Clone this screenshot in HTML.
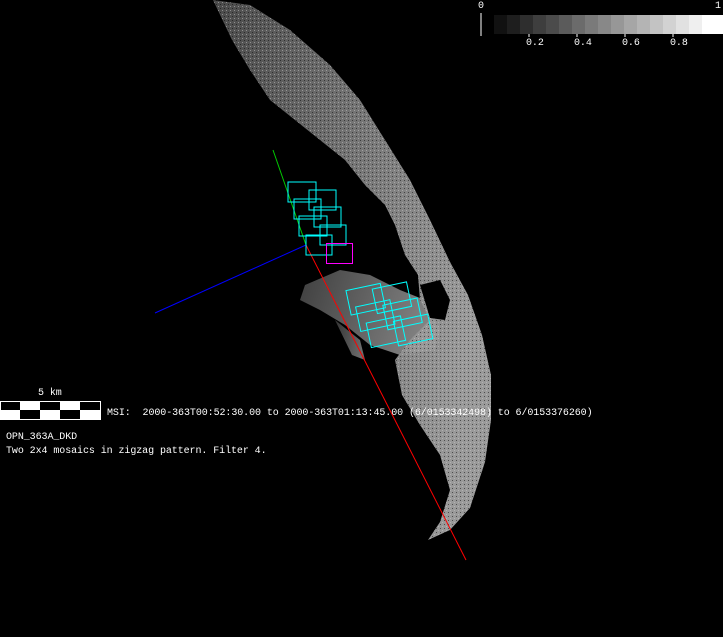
<!DOCTYPE html>
<html><head><style>
body{margin:0;background:#000;width:723px;height:637px;overflow:hidden;position:relative;font-family:"Liberation Mono","DejaVu Sans Mono",monospace;color:#fff;font-size:10px;letter-spacing:-0.08px}
.t{position:absolute;white-space:pre;line-height:12px}
</style></head><body>
<svg width="723" height="637" style="position:absolute;left:0;top:0">
<defs>
<linearGradient id="g" x1="0" y1="0" x2="1" y2="0.2">
<stop offset="0" stop-color="#4a4a4a"/><stop offset="0.6" stop-color="#7a7a7a"/><stop offset="1" stop-color="#9a9a9a"/>
</linearGradient>
<pattern id="p" width="4" height="4" patternUnits="userSpaceOnUse"><rect x="0" y="0" width="1" height="1" fill="#000"/><rect x="2" y="2" width="1" height="1" fill="#ccc"/></pattern>
</defs>
<g fill="url(#g)">
<path d="M213 0 L250 5 L290 30 L330 65 L360 100 L385 140 L410 180 L430 220 L450 262 L468 295 L482 335 L491 375 L491 420 L485 462 L470 508 L450 530 L428 540 L440 522 L450 490 L440 455 L420 425 L402 395 L395 360 L410 340 L430 320 L420 300 L418 275 L405 255 L395 225 L385 205 L365 185 L345 160 L320 140 L295 120 L270 100 L250 70 L232 40 Z"/>
<path d="M305 285 L340 270 L370 275 L400 290 L425 300 L440 330 L435 350 L400 355 L370 345 L345 325 L320 310 L300 300 Z" opacity="0.85"/>
<path d="M335 320 L360 340 L365 360 L352 355 Z" opacity="0.7"/>
</g>
<path d="M213 0 L250 5 L290 30 L330 65 L360 100 L385 140 L410 180 L430 220 L450 262 L468 295 L482 335 L491 375 L491 420 L485 462 L470 508 L450 530 L428 540 L440 522 L450 490 L440 455 L420 425 L402 395 L395 360 L410 340 L430 320 L420 300 L418 275 L405 255 L395 225 L385 205 L365 185 L345 160 L320 140 L295 120 L270 100 L250 70 L232 40 Z" fill="url(#p)" opacity="0.5"/>
<path d="M420 285 L440 280 L450 300 L445 320 L430 318 Z" fill="#000"/>
<line x1="273" y1="150" x2="306" y2="245" stroke="#0c0" stroke-width="1"/>
<line x1="306" y1="245" x2="466" y2="560" stroke="#f00" stroke-width="1"/>
<line x1="155" y1="313" x2="306" y2="245" stroke="#00f" stroke-width="1"/>
<g fill="none" stroke="#0ff" stroke-width="1">
<rect x="288" y="182" width="28" height="20"/><rect x="309" y="190" width="27" height="20"/>
<rect x="294" y="199" width="27" height="20"/><rect x="314" y="207" width="27" height="20"/>
<rect x="299" y="216" width="28" height="20"/><rect x="320" y="225" width="26" height="20"/>
<rect x="306" y="235" width="26" height="20"/>
<g transform="rotate(-12 390 315)">
<rect x="352" y="282" width="35" height="25"/><rect x="378" y="286" width="35" height="25"/>
<rect x="358" y="300" width="35" height="25"/><rect x="385" y="304" width="35" height="25"/>
<rect x="365" y="318" width="35" height="25"/><rect x="392" y="322" width="35" height="25"/>
</g>
</g>
<rect x="326.5" y="243.5" width="26" height="20" fill="none" stroke="#f0f"/>
<g>
<rect x="494" y="15" width="14" height="19" fill="#111"/><rect x="507" y="15" width="14" height="19" fill="#1e1e1e"/>
<rect x="520" y="15" width="14" height="19" fill="#2e2e2e"/><rect x="533" y="15" width="14" height="19" fill="#3e3e3e"/>
<rect x="546" y="15" width="14" height="19" fill="#4b4b4b"/><rect x="559" y="15" width="14" height="19" fill="#5b5b5b"/>
<rect x="572" y="15" width="14" height="19" fill="#6b6b6b"/><rect x="585" y="15" width="14" height="19" fill="#7a7a7a"/>
<rect x="598" y="15" width="14" height="19" fill="#888"/><rect x="611" y="15" width="14" height="19" fill="#979797"/>
<rect x="624" y="15" width="14" height="19" fill="#a6a6a6"/><rect x="637" y="15" width="14" height="19" fill="#b4b4b4"/>
<rect x="650" y="15" width="14" height="19" fill="#c3c3c3"/><rect x="663" y="15" width="14" height="19" fill="#d2d2d2"/>
<rect x="676" y="15" width="14" height="19" fill="#e1e1e1"/><rect x="689" y="15" width="14" height="19" fill="#efefef"/>
<rect x="702" y="15" width="21" height="19" fill="#fff"/>
<line x1="481" y1="13" x2="481" y2="36" stroke="#fff"/>
<line x1="529" y1="34" x2="529" y2="37" stroke="#fff"/><line x1="577" y1="34" x2="577" y2="37" stroke="#fff"/>
<line x1="625" y1="34" x2="625" y2="37" stroke="#fff"/><line x1="673" y1="34" x2="673" y2="37" stroke="#fff"/>
</g>
<rect x="0.5" y="401.5" width="100" height="18" fill="#fff" stroke="#fff"/>
<rect x="1" y="402" width="19" height="8" fill="#000"/><rect x="40" y="402" width="20" height="8" fill="#000"/><rect x="80" y="402" width="20" height="8" fill="#000"/>
<rect x="20" y="410" width="20" height="9" fill="#000"/><rect x="60" y="410" width="20" height="9" fill="#000"/>
</svg>
<div class="t" style="left:478px;top:1px">0</div>
<div class="t" style="left:715px;top:1px">1</div>
<div class="t" style="left:526px;top:38px">0.2</div>
<div class="t" style="left:574px;top:38px">0.4</div>
<div class="t" style="left:622px;top:38px">0.6</div>
<div class="t" style="left:670px;top:38px">0.8</div>
<div class="t" style="left:38px;top:388px">5 km</div>
<div class="t" style="left:107px;top:408px">MSI:  2000-363T00:52:30.00 to 2000-363T01:13:45.00 (6/0153342498) to 6/0153376260)</div>
<div class="t" style="left:6px;top:432px">OPN_363A_DKD</div>
<div class="t" style="left:6px;top:446px">Two 2x4 mosaics in zigzag pattern. Filter 4.</div>
</body></html>
